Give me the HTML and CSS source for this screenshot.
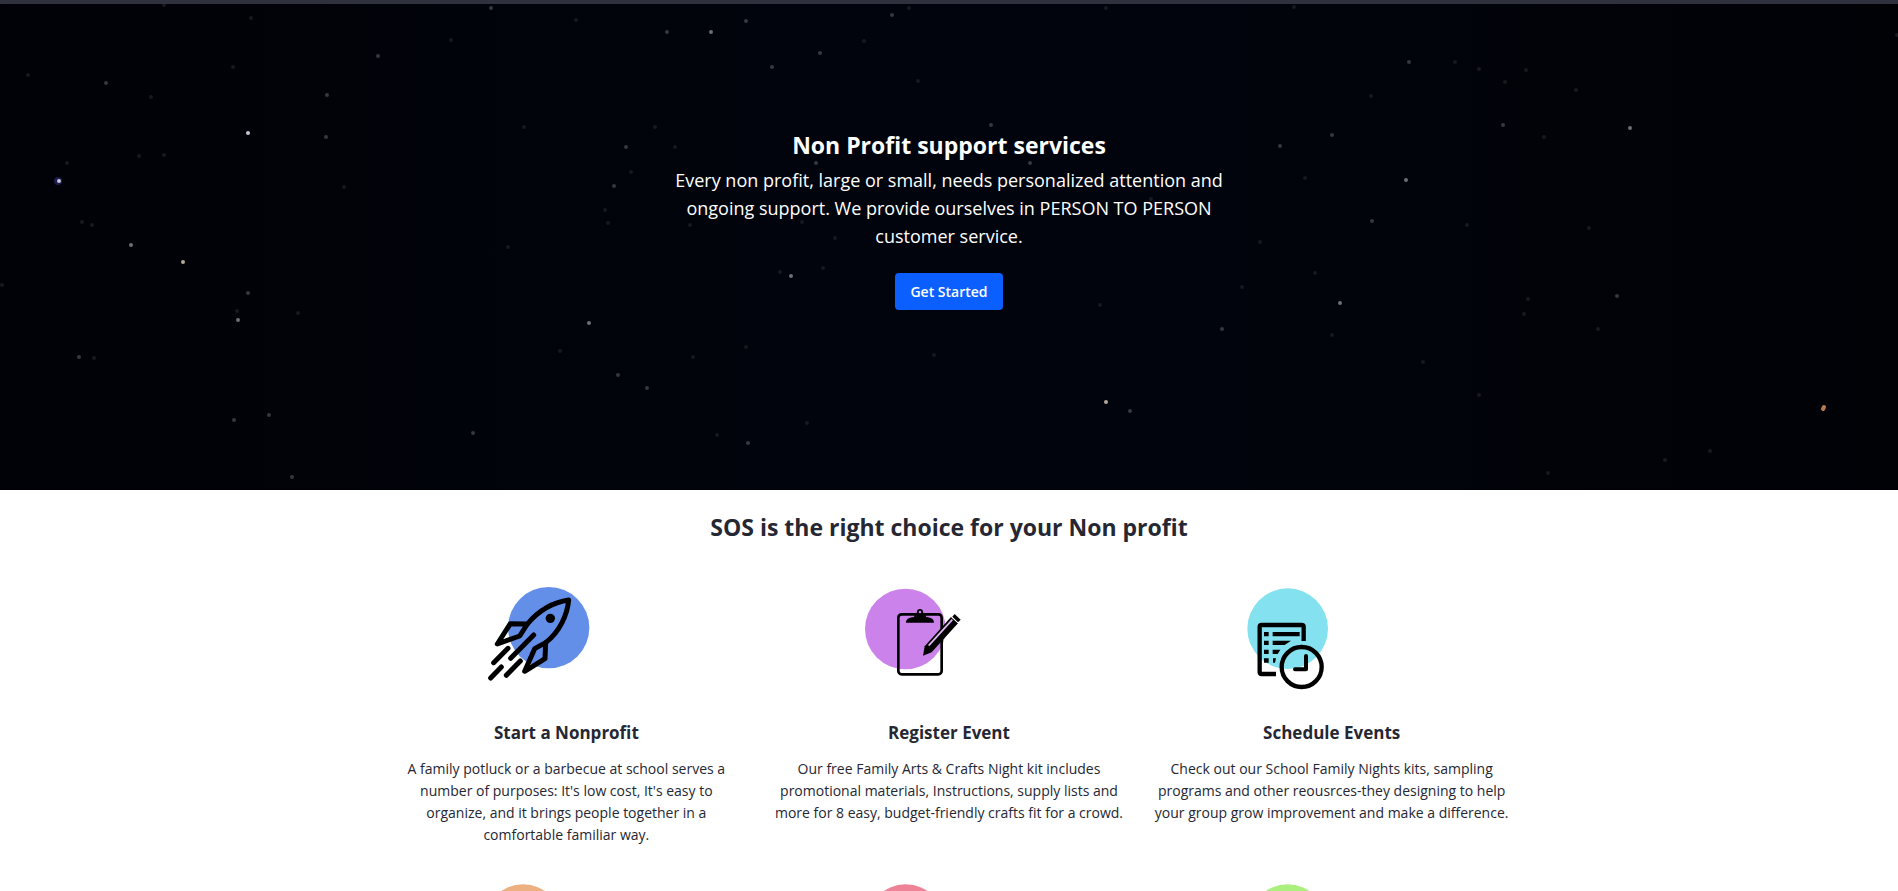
FILE: index.html
```
<!DOCTYPE html>
<html lang="en">
<head>
  <meta charset="UTF-8">
  <meta name="viewport" content="width=device-width, initial-scale=1">
  <title>SOS - Non Profit support services</title>
  <link rel="stylesheet" href="styles.css">
</head>
<body>
  <header class="topbar"></header>

  <section class="hero">
    <!-- night sky -->
    <svg class="sky" viewBox="0 0 1898 486" preserveAspectRatio="xMidYMid slice" aria-hidden="true">
      <path class="star faint" d="M164 1h0M251 14h0M233 63h0M151 93h0M67 159h0M344 183h0M82 218h0M92 221h0M2 281h0M237 307h0M94 354h0M560 347h0M605 206h0M608 219h0M524 123h0M451 36h0M508 243h0M631 168h0M298 309h0M28 71h0M576 16h0M139 152h0M164 151h0M909 4h0M864 37h0M918 77h0M655 123h0M675 143h0M1151 195h0M690 221h0M802 218h0M835 234h0M780 268h0M823 264h0M1242 283h0M1100 301h0M717 431h0M807 419h0M934 351h0M746 343h0M693 353h0M1106 4h0M1260 238h0M1294 3h0M1455 58h0M1526 66h0M1505 78h0M1305 174h0M1467 221h0M1589 224h0M1524 310h0M1598 325h0M1315 269h0M1423 358h0M1479 391h0M1710 447h0M1665 456h0M1548 469h0M1576 86h0M1479 65h0M1332 331h0M1897 31h0M1371 92h0M1544 133h0M1528 295h0"/>
      <path class="star dim" d="M491 4h0M378 52h0M106 79h0M327 91h0M326 133h0M248 289h0M79 353h0M269 411h0M234 416h0M292 473h0M473 429h0M618 371h0M614 182h0M626 143h0M667 28h0M746 17h0M892 11h0M820 49h0M772 63h0M991 121h0M816 159h0M1030 159h0M1222 325h0M647 384h0M1130 407h0M748 439h0M1409 58h0M1503 121h0M1332 131h0M1280 142h0M1372 217h0M1617 292h0"/>
      <path class="star mid" d="M131 241h0M238 316h0M589 319h0M711 28h0M791 272h0M1630 124h0M1406 176h0M1340 299h0"/>
      <path class="star halo" d="M58 177h0"/>
      <path class="star bright" d="M248 129h0M59 177h0"/>
      <path class="star warm" d="M183 258h0M1106 398h0"/>
      <path class="star orange" d="M1824 403l-1 2"/>
    </svg>
    <div class="hero-content">
      <h1>Non Profit support services</h1>
      <p>Every non profit, large or small, needs personalized attention and ongoing support. We provide ourselves in PERSON TO PERSON customer service.</p>
      <button type="button" class="btn">Get Started</button>
    </div>
  </section>

  <section class="services">
    <h2>SOS is the right choice for your Non profit</h2>
    <div class="cards">
      <div class="card">
        <svg class="icon" viewBox="19 0 600 390" aria-hidden="true">
          <circle cx="267" cy="173" r="122" fill="#648fe9"/>
          <g fill="none" stroke="#000" stroke-width="15" stroke-linejoin="round" stroke-linecap="round">
            <path d="M203 162C236 123 278 97 327 90C323 133 302 183 258 218"/>
            <path d="M203 162L152 161L113 222L180 198L203 162"/>
            <path d="M222 195L153 265"/>
            <path d="M258 218L225 236L195 304L256 266L258 218"/>
            <path d="M145 235L102 278M182 273L140 316M125 291L93 324"/>
          </g>
          <circle cx="272" cy="145" r="14"/>
        </svg>
        <h3>Start a Nonprofit</h3>
        <p>A family potluck or a barbecue at school serves a number of purposes: It's low cost, It's easy to<br> organize, and it brings people together in a comfortable familiar way.</p>
      </div>

      <div class="card">
        <svg class="icon" viewBox="27 0 600 390" aria-hidden="true">
          <circle cx="196" cy="177" r="121" fill="#cc82eb"/>
          <rect x="175" y="133" width="130" height="180" rx="10" fill="none" stroke="#000" stroke-width="8"/>
          <path d="M198 158C198 146 208 142 222 141L224 136Q231 134 231 126A9 9 0 0 1 249 126Q249 134 257 136L259 141C272 142 282 146 282 158Z"/>
          <circle cx="240" cy="126" r="4" fill="#cc82eb"/>
          <path d="M333 141L354 160L275 247L249 257L254 229Z"/>
          <path d="M337 149L266 227" stroke="#e3b8f4" stroke-width="5"/>
          <path d="M344 132L362 149L354 157L337 140Z"/>
          <path d="M335 141L354 159" stroke="#fff" stroke-width="3"/>
        </svg>
        <h3>Register Event</h3>
        <p>Our free Family Arts &amp; Crafts Night kit includes promotional materials, Instructions, supply lists and more for 8 easy, budget-friendly crafts fit for a crowd.</p>
      </div>

      <div class="card">
        <svg class="icon" viewBox="36 0 600 390" aria-hidden="true">
          <circle cx="203" cy="176" r="121" fill="#84e1ef"/>
          <path d="M168 312H125Q119 312 119 306V171Q119 165 125 165H245Q251 165 251 171V213" fill="none" stroke="#000" stroke-width="13"/>
          <path d="M132 186h14v13h-14zM132 212h14v13h-14zM132 239h14v13h-14zM132 265h14v13h-14z"/>
          <path d="M158 186H239V199H158zM158 212H213L194 225H158zM158 239H181L173 252H158zM159 265H168L165 278H159z"/>
          <circle cx="245" cy="291" r="60" fill="none" stroke="#000" stroke-width="13"/>
          <path d="M258 258V298H225" fill="none" stroke="#000" stroke-width="12" stroke-linecap="round" stroke-linejoin="round"/>
        </svg>
        <h3>Schedule Events</h3>
        <p>Check out our School Family Nights kits, sampling programs and other reousrces-they designing to help your group grow improvement and make a difference.</p>
      </div>

      <div class="card">
        <svg class="icon" viewBox="27 0 600 390" aria-hidden="true">
          <circle cx="198" cy="176" r="121" fill="#edb081"/>
        </svg>
      </div>

      <div class="card">
        <svg class="icon" viewBox="27 0 600 390" aria-hidden="true">
          <circle cx="197" cy="176" r="121" fill="#ee8297"/>
        </svg>
      </div>

      <div class="card">
        <svg class="icon" viewBox="36 0 600 390" aria-hidden="true">
          <circle cx="203" cy="176" r="121" fill="#abf07e"/>
        </svg>
      </div>
    </div>
  </section>
</body>
</html>
```
FILE: styles.css
```
* {
  margin: 0;
  padding: 0;
  box-sizing: border-box;
}

body {
  font-family: "Segoe UI", "Open Sans", "Noto Sans", sans-serif;
  color: #252733;
  background: #fff;
  overflow-x: hidden;
}

.topbar {
  height: 4px;
  background: #2f313e;
}

/* Hero */
.hero {
  position: relative;
  padding: 125px 16px 180px;
  background: linear-gradient(90deg, #010207, #01040c 40%, #01040c 65%, #010206);
  color: #fff;
  text-align: center;
}

.sky {
  position: absolute;
  top: 0;
  left: 0;
  width: 100%;
  height: 100%;
}

.star {
  fill: none;
  stroke-width: 4;
  stroke-linecap: round;
}

.faint { stroke: #17191f; }
.dim { stroke: #35383f; }
.mid { stroke: #6c6f74; }
.halo { stroke: #1d1a4c; stroke-width: 8; }
.bright { stroke: #c3c8d4; }
.warm { stroke: #b3a796; }
.orange { stroke: #b8794f; }

.hero-content {
  position: relative;
  max-width: 570px;
  margin: 0 auto;
}

.hero h1 {
  margin-bottom: 5px;
  font-size: 23px;
  line-height: 32px;
  font-weight: 700;
}

.hero p {
  margin-bottom: 23px;
  font-size: 18px;
  line-height: 28px;
}

.btn {
  display: block;
  height: 37px;
  margin: 0 auto;
  padding: 0 15px;
  border: 0;
  border-radius: 4px;
  background: #0b5fff;
  color: #fff;
  font-family: inherit;
  font-size: 14px;
  font-weight: 600;
  cursor: pointer;
}

/* Services */
.services {
  padding: 21px 16px 32px;
}

.services h2 {
  margin-bottom: 27px;
  font-size: 23px;
  line-height: 32px;
  font-weight: 700;
  text-align: center;
}

.cards {
  display: grid;
  grid-template-columns: repeat(3, 1fr);
  gap: 20px 16px;
  max-width: 1132px;
  margin: 0 auto;
}

.card {
  text-align: center;
}

.icon {
  display: block;
  width: 200px;
  height: 130px;
  margin: 0 auto 20px;
}

.card h3 {
  margin-bottom: 12px;
  font-size: 17px;
  line-height: 26px;
  font-weight: 700;
}

.card p {
  padding: 0 4px;
  font-size: 14px;
  line-height: 22px;
}
```
